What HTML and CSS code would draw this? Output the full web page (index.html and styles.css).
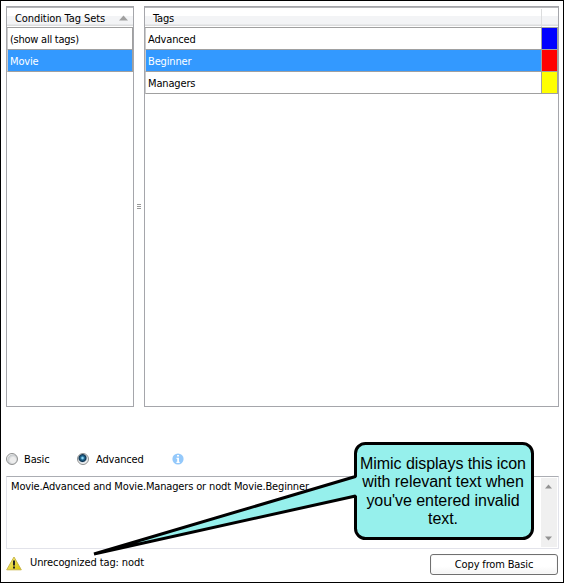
FILE: index.html
```
<!DOCTYPE html>
<html lang="en">
<head>
<meta charset="utf-8">
<title>Condition tags</title>
<link rel="stylesheet" href="styles.css">
</head>
<body>
<main class="window">
  <div class="panels">
    <section class="panel sets">
      <div class="head"><span class="label t-sets">Condition Tag Sets</span><svg class="sort" width="10" height="6" viewBox="0 0 10 6"><path d="M0 5.5 4.5 0.5 9 5.5z" fill="#a0a0a0"/></svg></div>
      <div class="row"><span class="t-show">(show all tags)</span></div>
      <div class="row selected"><span>Movie</span></div>
    </section>
    <div class="splitter"><i></i><i></i><i></i></div>
    <section class="panel tags">
      <div class="head"><span class="label">Tags</span><span class="swatch-head"></span></div>
      <div class="row"><span>Advanced</span><b class="swatch blue"></b></div>
      <div class="row selected"><span>Beginner</span><b class="swatch red"></b></div>
      <div class="row"><span>Managers</span><b class="swatch yellow"></b></div>
    </section>
  </div>
  <div class="modes">
    <span class="radio"></span><span class="basic">Basic</span>
    <span class="radio on"></span><span class="advanced">Advanced</span>
    <svg class="info" width="12" height="12" viewBox="0 0 12 12"><circle cx="6" cy="6" r="5.600" fill="#94c9fb"/><path d="M5 2h2v1.600H5zM4.500 4.800H7v4h.7V10H4.400V8.800h.8V6h-.7z" fill="#fff"/></svg>
  </div>
  <div class="editor">
    <div class="expression">Movie.Advanced and Movie.Managers or nodt Movie.Beginner</div>
    <div class="scroll">
      <svg width="8" height="5" viewBox="0 0 8 5"><path d="M0 4.500 3.500 0.500 7 4.500z" fill="#929292"/></svg>
      <svg width="8" height="5" viewBox="0 0 8 5"><path d="M0 0.500 3.500 4.500 7 0.500z" fill="#929292"/></svg>
    </div>
  </div>
  <footer class="footer">
    <svg class="warn" width="16" height="15" viewBox="0 0 16 15">
      <defs><linearGradient id="g" x1="0" y1="0" x2="1" y2="1"><stop offset="0" stop-color="#f4ee90"/><stop offset="1" stop-color="#dcc500"/></linearGradient></defs>
      <path d="M8 1 15.300 13.800H.7z" fill="url(#g)" stroke="#c9b648" stroke-linejoin="round"/>
      <path d="M7 4.500h2V9.500H7zM7 10.500h2v2H7z" fill="#222"/>
    </svg>
    <span class="message">Unrecognized tag: nodt</span>
    <button class="copy"><span>Copy from Basic</span></button>
  </footer>
  <div class="callout">
    <svg width="450" height="120" viewBox="0 0 450 120">
      <path d="M275.500 3.500H432.500A10 10 0 0 1 442.500 13.500V88.500A10 10 0 0 1 432.500 98.500H275.500A10 10 0 0 1 265.500 88.500V56L4 114 265.500 36.500V13.500A10 10 0 0 1 275.500 3.500Z" fill="#96f0ec" stroke="#000" stroke-width="3" stroke-linejoin="bevel"/>
    </svg>
    <p><span>Mimic displays this icon</span><span>with relevant text when</span><span>you've entered invalid</span><span>text.</span></p>
  </div>
</main>
</body>
</html>
```
FILE: styles.css
```
* { box-sizing: border-box; }
body { margin: 0; font: 11px/14px "DejaVu Sans Condensed", "DejaVu Sans", sans-serif; letter-spacing: -0.15px; color: #000; background: #fff; }
.window { position: relative; width: 564px; height: 583px; border: 1px solid #000; padding: 5px 4px 0 5px; white-space: nowrap; overflow: hidden; }
.panels { display: flex; height: 401px; }
.panel { border: 1px solid #a5a6ab; }
.sets { width: 128px; }
.tags { width: 415px; }
.splitter { width: 10px; display: flex; flex-direction: column; align-items: center; justify-content: center; gap: 1px; }
.splitter i { width: 4px; height: 1px; background: #999; }
.head { height: 21px; display: flex; align-items: center; border-top: 1px solid #b4b5b8; border-bottom: 1px solid #a0a0a0; background: linear-gradient(#fff 0 8px, #f3f4f6 8px 16px, #dcddde 17px 18px, #fff 18px); }
.label { padding: 2px 0 0 8px; flex: 1; }
.t-sets { letter-spacing: -0.08px; }
.t-show { letter-spacing: -0.25px; }
.sort { margin: 0 4px 0 0; }
.swatch-head { width: 17px; height: 18px; border-left: 1px solid #dcddde; }
.row { height: 22px; display: flex; align-items: center; border-bottom: 1px solid #a0a0a0; border-left: 1px solid #ccc; padding-left: 2px; }
.sets .row { border-right: 1px solid #a0a0a0; }
.tags .row { border-right: 1px solid #a0a0a0; }
.row span { flex: 1; padding-top: 2px; }
.selected { background: #3399ff; color: #fff; }
.swatch { width: 16px; height: 21px; border-left: 1px solid #a0a0a0; }
.blue { background: #00f; }
.red { background: #f00; }
.yellow { background: #ff0; }
.modes { display: flex; align-items: center; height: 14px; margin-top: 45px; }
.radio { width: 12px; height: 12px; border-radius: 50%; border: 1px solid #8e8f8f; background: radial-gradient(circle at 60% 60%, #ededed 0 30%, #c5c9cc 60%, #f4f4f4 70%); }
.radio.on { background: radial-gradient(circle at 45% 40%, #8fd6f4 0 8%, #26709a 22%, #0d3452 43%, #dce2e6 56%, #f4f4f4 70%); }
.basic { width: 59px; padding: 1px 0 0 6px; }
.advanced { width: 83px; padding: 1px 0 0 7px; }
.editor { height: 73px; margin-top: 10px; border: 1px solid #e2e3ea; border-top-color: #abadb3; display: flex; justify-content: space-between; padding: 1px; }
.expression { padding: 2px 0 0 3px; }
.scroll { width: 16px; background: #f0f0f0; display: flex; flex-direction: column; justify-content: space-between; align-items: center; padding: 6px 0; }
.footer { display: flex; height: 30px; align-items: flex-start; padding-top: 5px; }
.warn { margin-top: 2px; }
.message { margin: 2px 0 0 8px; flex: 1; letter-spacing: -0.1px; }
.copy { width: 128px; height: 21px; font: inherit; letter-spacing: -0.15px; color: #000; padding: 1px 0 0; margin-right: 1px; border: 1px solid #707070; border-radius: 3px; background: linear-gradient(#fff 0 60%, #f4f4f4); box-shadow: inset 0 0 0 1px #f8f8f8; }
.callout { position: absolute; left: 89px; top: 439px; width: 450px; height: 120px; }
.callout svg { display: block; }
.callout p { position: absolute; left: 265px; top: 15px; width: 176px; margin: 0; font: 16px/18.300px "Liberation Sans", sans-serif; letter-spacing: -0.05px; text-align: center; }
.callout p span { display: block; }
```
